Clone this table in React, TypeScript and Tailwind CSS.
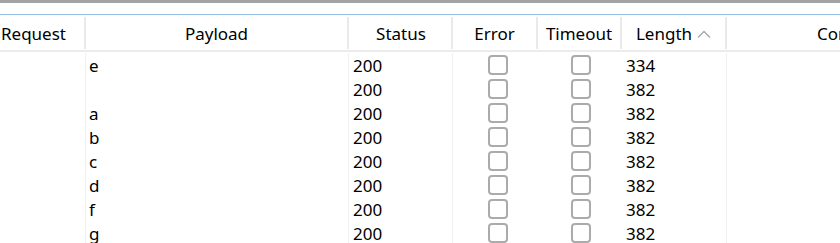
import React from "react";

const rows: { payload: string; length: string }[] = [
  { payload: "e", length: "334" },
  { payload: "", length: "382" },
  { payload: "a", length: "382" },
  { payload: "b", length: "382" },
  { payload: "c", length: "382" },
  { payload: "d", length: "382" },
  { payload: "f", length: "382" },
  { payload: "g", length: "382" },
];

function Box() {
  return <div className="w-[20px] h-[20px] rounded-[4px] border-2 border-[#ababab] bg-white" />;
}

function Sep() {
  return <div className="w-[2px] h-[32px] self-center bg-[#e9e9e9] shrink-0" />;
}

export default function App() {
  return (
    <div
      className="w-[840px] h-[243px] overflow-hidden bg-white text-black text-[17px]"
      style={{ fontFamily: '"Noto Sans", "Open Sans", sans-serif' }}
    >
      <div className="h-[3px] bg-[#a3a3a3]" />
      <div className="h-[11px] bg-white" />
      <div className="h-px bg-[#95bde3]" />
      {/* column headers */}
      <div className="flex h-[35px] items-center whitespace-nowrap">
        <div className="w-[84px] shrink-0 pl-[1px] pt-[2px]">Request</div>
        <Sep />
        <div className="w-[261px] shrink-0 text-center pt-[2px]">Payload</div>
        <Sep />
        <div className="w-[102px] shrink-0 text-center pl-[2px] pt-[2px]">Status</div>
        <Sep />
        <div className="w-[83px] shrink-0 text-center pt-[2px]">Error</div>
        <Sep />
        <div className="w-[82px] shrink-0 text-center pt-[2px]">Timeout</div>
        <Sep />
        <div className="w-[103px] shrink-0 flex items-center justify-center gap-[5px] pt-[2px]">
          <span>Length</span>
          <svg width="14" height="8" viewBox="0 0 14 8" fill="none">
            <path d="M1 7.5 L7 1.5 L13 7.5" stroke="#a8a8a8" strokeWidth="1.4" />
          </svg>
        </div>
        <Sep />
        <div className="flex-1 pl-[90px] pt-[2px]">Comment</div>
      </div>
      <div className="h-[2px] bg-[#ececec]" />
      {/* result rows */}
      <div className="flex flex-col pt-[1px]">
        {rows.map((r, i) => (
          <div key={i} className="flex h-[24px] items-center whitespace-nowrap">
            <div className="w-[85px] h-full shrink-0" />
            <div className="w-[263px] h-full shrink-0 border-l border-[#f1f1f1] pl-[3px] pt-[2px] flex items-center">
              {r.payload}
            </div>
            <div className="w-[104px] h-full shrink-0 border-l border-[#f1f1f1] pl-[4px] pt-[2px] flex items-center">
              200
            </div>
            <div className="w-[85px] h-full shrink-0 border-l border-[#f1f1f1] flex items-center justify-center pl-[5px]">
              <Box />
            </div>
            <div className="w-[84px] h-full shrink-0 flex items-center justify-center pl-[3px]">
              <Box />
            </div>
            <div className="w-[105px] h-full shrink-0 pl-[5px] pt-[2px] flex items-center">{r.length}</div>
            <div className="flex-1 h-full border-l border-[#f1f1f1]" />
          </div>
        ))}
      </div>
    </div>
  );
}
